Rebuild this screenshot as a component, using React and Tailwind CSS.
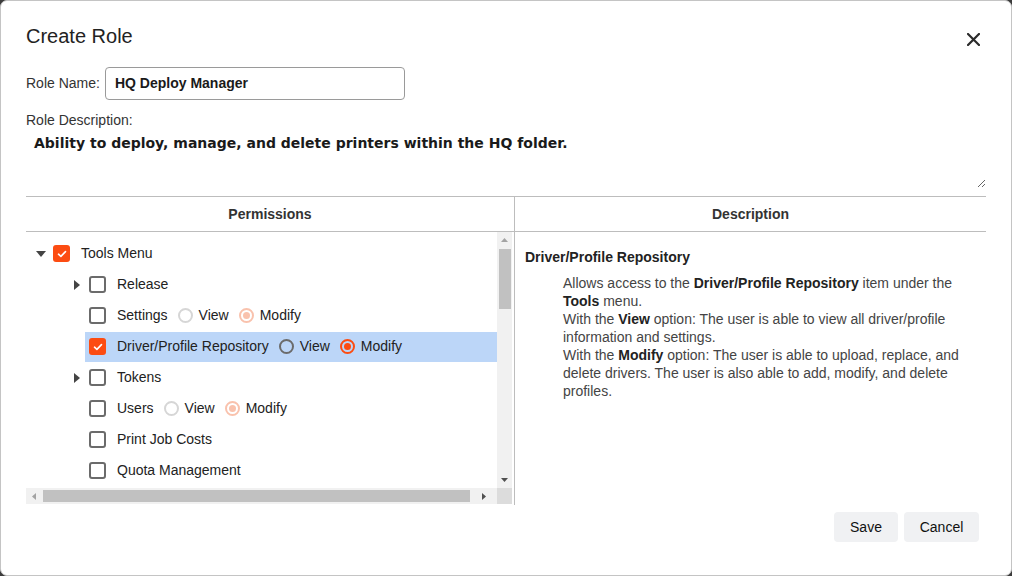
import React from "react";

function Checkbox({ checked }) {
  if (checked) {
    return (
      <div className="w-[17px] h-[17px] rounded-[3px] bg-[#fc4c12] flex items-center justify-center shrink-0">
        <svg width="10" height="8" viewBox="0 0 10 8">
          <path d="M1.5 4.2 L3.9 6.4 L8.5 1.6" fill="none" stroke="white" strokeWidth="1.6" strokeLinecap="round" strokeLinejoin="round" />
        </svg>
      </div>
    );
  }
  return <div className="w-[17px] h-[17px] rounded-[3px] border-2 border-[#6b6b6b] bg-white shrink-0" />;
}

function Radio({ checked, disabled }) {
  if (checked) {
    return (
      <div className={`w-[15px] h-[15px] rounded-full border-2 flex items-center justify-center shrink-0 ${disabled ? "border-[#f9c2ad]" : "border-[#fc4c12]"}`}>
        <div className={`w-[7px] h-[7px] rounded-full ${disabled ? "bg-[#f9c2ad]" : "bg-[#fc4c12]"}`} />
      </div>
    );
  }
  return <div className={`w-[15px] h-[15px] rounded-full border-2 shrink-0 ${disabled ? "border-[#d6d6d6]" : "border-[#6b6b6b]"}`} />;
}

function Toggle({ type }) {
  return (
    <div className="w-4 h-4 flex items-center justify-center shrink-0">
      {type === "down" && (
        <svg width="10" height="6" viewBox="0 0 10 6"><path d="M0 0 L10 0 L5 6 Z" fill="#444" /></svg>
      )}
      {type === "right" && (
        <svg width="6" height="10" viewBox="0 0 6 10"><path d="M0 0 L6 5 L0 10 Z" fill="#444" /></svg>
      )}
    </div>
  );
}

function Row({ level, toggle, checked, label, radios, selected }) {
  return (
    <div className="h-[31px] flex items-center" style={{ paddingLeft: level * 36 }}>
      <Toggle type={toggle} />
      <div className={`flex items-center h-[30px] pl-1 pr-2 gap-[11px] ${selected ? "bg-[#bcd6f8] flex-1" : ""}`}>
        <Checkbox checked={checked} />
        <div className="flex items-center whitespace-nowrap">
          <span>{label}</span>
          {radios && (
            <div className="flex items-center ml-[10px]">
              <Radio checked={false} disabled={radios.disabled} />
              <span className="ml-[6px]">View</span>
              <div className="ml-[10px]"><Radio checked={true} disabled={radios.disabled} /></div>
              <span className="ml-[6px]">Modify</span>
            </div>
          )}
        </div>
      </div>
    </div>
  );
}

export default function App() {
  return (
    <div className="w-[1012px] h-[576px] bg-[#3c3c3c]" style={{ fontFamily: '"Liberation Sans", Arial, sans-serif' }}>
      <div className="w-full h-full bg-white rounded-[7px] border border-[#c4c4c4] px-[25px] pt-[21px] flex flex-col text-[#222]">
        <div className="flex items-center justify-between h-[28px]">
          <h1 className="text-[20px] leading-[28px] text-[#222]">Create Role</h1>
          <svg width="13" height="13" viewBox="0 0 13 13" className="mr-[6px] mt-[7px]">
            <path d="M1 1 L12 12 M12 1 L1 12" stroke="#2b2b2b" strokeWidth="2.2" strokeLinecap="square" />
          </svg>
        </div>

        <div className="flex items-center mt-[17px]">
          <span className="text-[14px] font-medium text-[#333] mr-[5px]">Role Name:</span>
          <div className="w-[300px] h-[33px] border border-[#9a9a9a] rounded-[4px] flex items-center px-[9px] text-[14px] font-bold text-[#1a1a1a]">
            HQ Deploy Manager
          </div>
        </div>

        <div className="mt-[10px] h-[20px] leading-[20px] text-[14px] font-medium text-[#333]">Role Description:</div>
        <textarea
          readOnly
          value="Ability to deploy, manage, and delete printers within the HQ folder."
          className="w-full h-[58px] px-[8px] pt-[3px] outline-none text-[14px] font-bold text-[#1a1a1a] resize-y"
          style={{ fontFamily: '"DejaVu Sans", Verdana, sans-serif' }}
        />

        <div className="mt-[8px] w-[960px] border-t border-[#bdbdbd] flex flex-col">
          <div className="flex h-[35px] border-b border-[#bdbdbd] text-[14px] font-bold text-[#333]">
            <div className="w-[489px] border-r border-[#bdbdbd] flex items-center justify-center">Permissions</div>
            <div className="flex-1 flex items-center justify-center">Description</div>
          </div>
          <div className="flex h-[273px]">
            <div className="w-[489px] border-r border-[#bdbdbd] flex flex-col">
              <div className="flex h-[256px]">
                <div className="flex-1 overflow-hidden pt-[6px] pl-[7px] text-[14px] text-[#222]">
                  <Row level={0} toggle="down" checked label="Tools Menu" />
                  <Row level={1} toggle="right" label="Release" />
                  <Row level={1} label="Settings" radios={{ disabled: true }} />
                  <Row level={1} checked label="Driver/Profile Repository" radios={{ disabled: false }} selected />
                  <Row level={1} toggle="right" label="Tokens" />
                  <Row level={1} label="Users" radios={{ disabled: true }} />
                  <Row level={1} label="Print Job Costs" />
                  <Row level={1} label="Quota Management" />
                </div>
                <div className="w-[15px] bg-[#f1f1f1] flex flex-col items-center mr-[2px]">
                  <div className="h-[16px] flex items-center justify-center">
                    <svg width="7" height="4" viewBox="0 0 7 4"><path d="M0 4 L3.5 0 L7 4 Z" fill="#a3a3a3" /></svg>
                  </div>
                  <div className="w-[12px] h-[60px] bg-[#c1c1c1] mt-[1px]" />
                  <div className="flex-1" />
                  <div className="h-[16px] flex items-center justify-center">
                    <svg width="7" height="4" viewBox="0 0 7 4"><path d="M0 0 L7 0 L3.5 4 Z" fill="#505050" /></svg>
                  </div>
                </div>
              </div>
              <div className="flex h-[16px]">
                <div className="flex-1 bg-[#f1f1f1] flex items-center">
                  <div className="w-[16px] flex items-center justify-center">
                    <svg width="4" height="7" viewBox="0 0 4 7"><path d="M4 0 L0 3.5 L4 7 Z" fill="#a3a3a3" /></svg>
                  </div>
                  <div className="w-[427px] h-[12px] bg-[#c1c1c1] ml-[1px]" />
                  <div className="flex-1 flex items-center justify-center">
                    <svg width="4" height="7" viewBox="0 0 4 7"><path d="M0 0 L4 3.5 L0 7 Z" fill="#505050" /></svg>
                  </div>
                </div>
                <div className="w-[15px] bg-[#dcdcdc] mr-[2px]" />
              </div>
            </div>
            <div className="flex-1 pl-[10px] pt-[15px] text-[#333]">
              <div className="text-[14px] font-bold text-[#222] leading-[20px]">Driver/Profile Repository</div>
              <div className="ml-[38px] mt-[7px] w-[410px] text-[14px] leading-[18px] text-[#444]">
                <p>Allows access to the <b className="text-[#222]">Driver/Profile Repository</b> item under the <b className="text-[#222]">Tools</b> menu.</p>
                <p>With the <b className="text-[#222]">View</b> option: The user is able to view all driver/profile information and settings.</p>
                <p>With the <b className="text-[#222]">Modify</b> option: The user is able to upload, replace, and delete drivers. The user is also able to add, modify, and delete profiles.</p>
              </div>
            </div>
          </div>
        </div>

        <div className="flex justify-end gap-[6px] mt-[7px] mr-[7px]">
          <button className="w-[64px] h-[30px] rounded-[4px] bg-[#f0f1f3] text-[14px] text-[#111]">Save</button>
          <button className="w-[75px] h-[30px] rounded-[4px] bg-[#f0f1f3] text-[14px] text-[#111]">Cancel</button>
        </div>
      </div>
    </div>
  );
}
